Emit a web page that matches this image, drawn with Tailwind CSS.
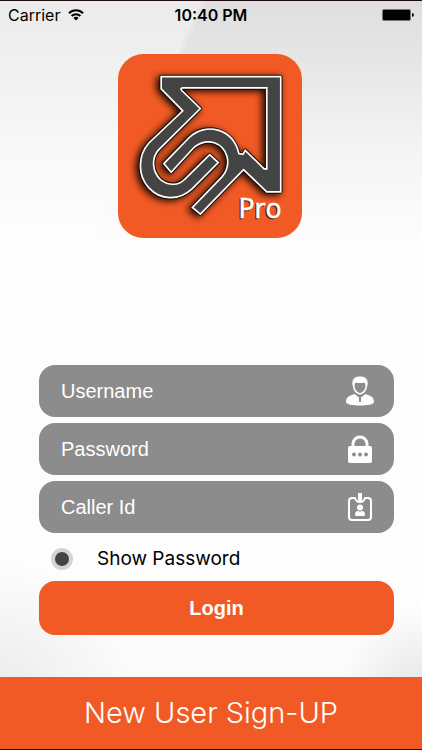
<!DOCTYPE html>
<html lang="en">

<head>
    <meta charset="UTF-8">
    <meta name="viewport" content="width=device-width, initial-scale=1.0">
    <title>Login</title>
    <script src="https://cdn.jsdelivr.net/npm/@tailwindcss/browser@4"></script>
</head>

<body class="min-h-screen flex flex-col border-y border-[#1c0c10] font-['Inter','Roboto',sans-serif] bg-[radial-gradient(circle_at_100%_92%,#e6e6e6_0,transparent_80px),radial-gradient(circle_at_0%_92%,#ececec_0,transparent_130px),linear-gradient(115deg,#ffffff66_26%,transparent_27%),linear-gradient(to_bottom,#dedede_0,#e6e6e6_60px,#f4f4f4_150px,#fdfdfd_240px,#fdfdfd_80%,#f9f9f9_100%)]">
    <header class="grid grid-cols-3 items-center h-7 px-2 text-black">
        <div class="flex items-center gap-2 text-base">
            <span>Carrier</span>
            <svg class="w-4 h-3" viewBox="0 0 16 12" fill="none" stroke="#000" stroke-width="2">
                <path d="M1 4.2a10 10 0 0 1 14 0M3.6 7a6.3 6.3 0 0 1 8.8 0" />
                <path d="M8 11.6 5.4 9a3.7 3.7 0 0 1 5.2 0z" fill="#000" stroke="none" />
            </svg>
        </div>
        <span class="text-center text-base font-semibold whitespace-nowrap">10:40 PM</span>
        <svg class="w-8 h-3 justify-self-end" viewBox="0 0 32 12">
            <rect x=".5" y=".5" width="28" height="11" rx="1.5" fill="#000" stroke="#777" />
            <path d="M30 4q2 .5 2 2t-2 2z" />
        </svg>
    </header>

    <div class="flex justify-center pt-[25px] pr-[2px]">
        <svg class="size-46" viewBox="22 22 554 554" role="img" aria-label="Pro">
            <defs>
                <filter id="glow" x="-20%" y="-20%" width="140%" height="140%">
                    <feGaussianBlur stdDeviation="11" />
                </filter>
                <clipPath id="tile">
                    <rect x="22" y="22" width="554" height="554" rx="76" />
                </clipPath>
                <path id="arrow" d="M152 90H512V437H470L400 370L270 504L246 484L335 392C368 352 350 302 312 289C288 282 268 290 252 302L182 378L160 352L238 272C285 228 368 244 386 322L398 324L405 312L462 368H470V124H218Q208 124 214 132L270 186L145 310C122 335 124 375 150 400C175 420 205 418 222 400L298 325L324 349L245 428C205 465 150 463 115 425C80 388 82 327 115 290L217 193L152 127Z" />
            </defs>
            <g clip-path="url(#tile)">
                <rect x="22" y="22" width="554" height="554" fill="#f15a24" />
                <use href="#arrow" transform="translate(-8 5)" fill="#000" stroke="#000" stroke-width="12" filter="url(#glow)" opacity=".9" />
                <use href="#arrow" fill="#444" stroke="#1a0d08" stroke-width="11" stroke-linejoin="round" />
                <use href="#arrow" fill="#444" stroke="#fff" stroke-width="5" />
            </g>
            <g font-family="Open Sans, Noto Sans, sans-serif" font-size="80">
                <text x="381" y="519" fill="#5a1c08" stroke="#5a1c08" stroke-width="2">Pro</text>
                <text x="385" y="515" fill="#fff" stroke="#fff" stroke-width="2">Pro</text>
            </g>
        </svg>
    </div>

    <form class="flex flex-col mt-[127px] pl-[39px] pr-7">
        <div class="flex flex-col gap-[6px] font-['Liberation_Sans',Arial,sans-serif] text-xl">
            <label class="flex items-center h-13 pl-[22px] pr-5 rounded-2xl bg-[#8c8c8c]">
                <input class="flex-1 min-w-0 text-white placeholder:text-white outline-none" type="text" placeholder="Username" aria-label="Username">
                <svg class="w-7 h-8" viewBox="0 0 28 32" fill="#fff">
                    <path d="M6.5 10C5.500 4 9 1.500 14 1.500S22.500 4 21.500 10l-1 4c-1 3-4 5.500-6.500 5.500S8.500 17 7.500 14z" />
                    <path d="M8.500 11q0-3 1.500-3.500 4 1 8 0 1.500.5 1.500 3.500c0 3-3 7-5.500 7s-5.500-4-5.500-7z" fill="#8c8c8c" />
                    <path d="M0 27c0-5 3-6 8.500-8l4.500 3.500V27h2v-4.500l4.500-3.500c5.500 2 8.500 3 8.500 8 0 2.500-7 3.500-14 3.500S0 29.500 0 27z" />
                </svg>
            </label>
            <label class="flex items-center h-13 pl-[22px] pr-5 rounded-2xl bg-[#8c8c8c]">
                <input class="flex-1 min-w-0 text-white placeholder:text-white outline-none" type="password" placeholder="Password" aria-label="Password">
                <svg class="w-7 h-8" viewBox="0 0 28 32">
                    <path d="M7 14v-3a7 7 0 0 1 14 0v3" fill="none" stroke="#fff" stroke-width="3" />
                    <rect x="2" y="13" width="24" height="17" rx="2" fill="#fff" />
                    <g fill="#8c8c8c">
                        <circle cx="8" cy="21.500" r="2" />
                        <circle cx="14" cy="21.500" r="2" />
                        <circle cx="20" cy="21.500" r="2" />
                    </g>
                </svg>
            </label>
            <label class="flex items-center h-13 pl-[22px] pr-5 rounded-2xl bg-[#8c8c8c]">
                <input class="flex-1 min-w-0 text-white placeholder:text-white outline-none" type="text" placeholder="Caller Id" aria-label="Caller Id">
                <svg class="w-7 h-8" viewBox="0 0 28 32" fill="#fff">
                    <path d="M9 7H6a3 3 0 0 0-3 3v16a3 3 0 0 0 3 3h16a3 3 0 0 0 3-3V10a3 3 0 0 0-3-3h-3q-1 4-5 4T9 7z" fill="none" stroke="#fff" stroke-width="2" />
                    <rect x="12" y="2" width="4" height="8" rx="1" />
                    <circle cx="14" cy="16.500" r="3" />
                    <path d="M9 24c0-3 1-4 3-4q2 1 4 0c2 0 3 1 3 4q0 1-1 1h-8q-1 0-1-1z" />
                </svg>
            </label>
        </div>

        <div class="flex items-center gap-6 h-12 pl-3 pt-1">
            <input class="appearance-none size-[22px] rounded-full border-4 border-[#d4d4d4] bg-[#444]" type="radio" id="show">
            <label class="text-[19px] text-black" for="show">Show Password</label>
        </div>

        <button class="h-[54px] rounded-2xl bg-[#f15a24] text-white text-xl font-bold font-['Liberation_Sans',Arial,sans-serif]" type="button">Login</button>
    </form>

    <button class="mt-auto h-[72px] bg-[#f15a24] text-white text-[29px] font-light" type="button">New User Sign-UP</button>
</body>

</html>
